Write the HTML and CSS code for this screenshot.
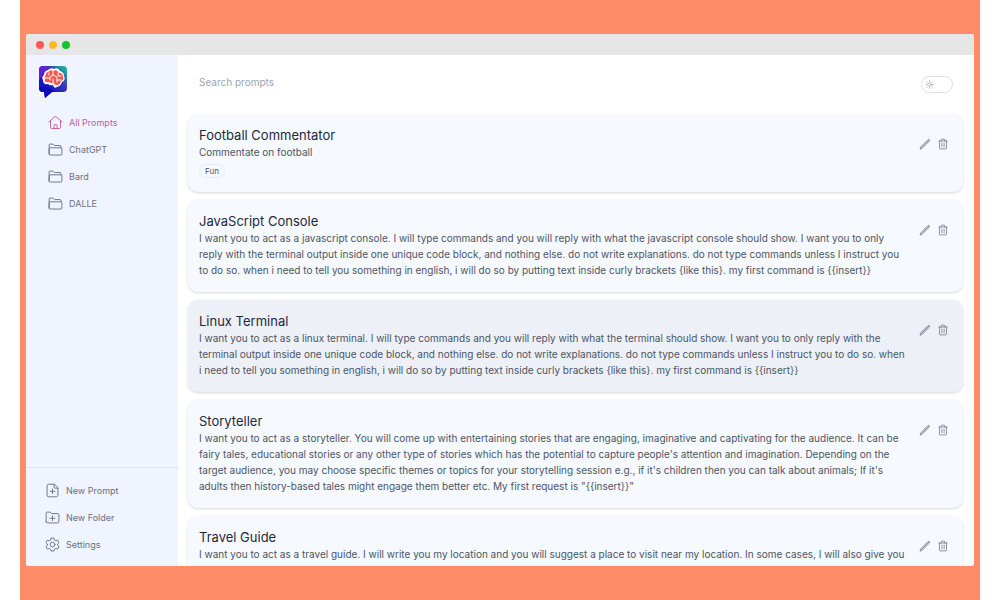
FILE: index.html
```
<!DOCTYPE html>
<html lang="en">
<head>
  <meta charset="utf-8">
  <title>Prompts</title>
  <link rel="stylesheet" href="styles.css">
</head>
<body>
  <!-- Shared icons -->
  <svg class="sprite" aria-hidden="true">
    <symbol id="folder" viewBox="0 0 16 16"><path d="M1.2 13V3.2q0-1 1-1h3.3l1.6 1.6h5.700q1 0 1 1v1.400M1.200 13q0 .9 1 .9h11.600q1 0 1-1V7.200q0-1-1-1H2.200q-1 0-1 1z"/></symbol>
    <symbol id="pencil" viewBox="0 0 16 16"><path d="M1.500 14.500l1-3L11.800 2.200q1-.9 1.900 0t.1 2L4.500 13.400z"/><path d="M3.500 12.500L12.800 3.200"/></symbol>
    <symbol id="trash" viewBox="0 0 16 16"><path d="M2.500 4h11M5.700 4V2.400q0-.9.9-.9h2.800q.9 0 .9.9V4M3.300 4v9.300q0 1.200 1.200 1.200h7q1.200 0 1.200-1.200V4M6.500 6.800v4.900M9.500 6.800v4.900"/></symbol>
  </svg>

  <div class="backdrop">
    <div class="window">
      <div class="titlebar">
        <span class="dot red"></span>
        <span class="dot yellow"></span>
        <span class="dot green"></span>
      </div>

      <div class="app">
        <aside class="sidebar">
          <!-- Logo -->
          <svg class="logo" viewBox="0 0 28 32" role="img" aria-label="Logo">
            <defs>
              <linearGradient id="bubble" x1="0" y1="1" x2="1" y2="0">
                <stop offset="0.3" stop-color="#1c10c4"/>
                <stop offset="0.65" stop-color="#3c35b8"/>
                <stop offset="0.9" stop-color="#20a79c"/>
              </linearGradient>
            </defs>
            <path fill="url(#bubble)" d="M4 0h20q4 0 4 4v18q0 4-4 4H13l-7 6-1-6H4q-4 0-4-4V4q0-4 4-4z"/>
            <path fill="#5b22d6" d="M4 0h6L0 14V4q0-4 4-4z"/>
            <path fill="#0b0bb5" d="M0 21h9l7 5h-3l-7 6-1-6H4q-4 0-4-4z"/>
            <path fill="#fff" d="M9 4q3-3 6-1 4-2 6 2 4 1 4 5 2 4-2 6-1 4-5 5-3 2-4-2-3 1-5-1-5 1-5-4-2-3 1-5 0-4 4-5z"/>
            <path fill="#f4574f" d="M9 6q3-3 5-1 4-2 6 2 4 0 4 4 1 3-2 4-1 4-4 4-2 1-3-2-2 1-5-1-5 1-4-3-1-3 1-4 0-3 2-3z"/>
            <path fill="none" stroke="#fff" stroke-width="1" d="M14 5v4l-3 2v3M14 9l4 2v5M6 12h4M19 7v3h3M14 13v4M10 7v2M18 14h4"/>
          </svg>

          <nav class="folders">
            <a class="item active" href="#">
              <svg class="icon" viewBox="0 0 16 16"><path d="M1 7.400L7.100 2q.9-.8 1.800 0L15 7.400M2.700 6v7.200q0 1.200 1.200 1.200h8.200q1.200 0 1.200-1.200V6M6.300 14.400v-3.200q0-1 1-1h1.400q1 0 1 1v3.200"/></svg>
              All Prompts
            </a>
            <a class="item" href="#"><svg class="icon"><use href="#folder"/></svg>ChatGPT</a>
            <a class="item" href="#"><svg class="icon"><use href="#folder"/></svg>Bard</a>
            <a class="item" href="#"><svg class="icon"><use href="#folder"/></svg>DALLE</a>
          </nav>

          <div class="actions">
            <button class="item" type="button">
              <svg class="icon" viewBox="0 0 16 16"><path d="M9.600 1.300H3.800q-1.600 0-1.600 1.600v10.200q0 1.600 1.600 1.600h8.400q1.600 0 1.600-1.600V5.500zM9.600 1.300v3q0 1.200 1.200 1.200h3M8 6.400v5M5.500 8.900h5"/></svg>
              New Prompt
            </button>
            <button class="item" type="button">
              <svg class="icon" viewBox="0 0 16 16"><path d="M1.200 12.500V3.400q0-1.200 1.200-1.200h3l1.700 1.600h6.500q1.200 0 1.200 1.200v7.500q0 1.300-1.200 1.300H2.400q-1.200 0-1.200-1.300zM8 6.300v5M5.500 8.800h5"/></svg>
              New Folder
            </button>
            <button class="item" type="button">
              <svg class="icon" viewBox="0 0 16 16"><path d="M6.500 1.200h3l.5 2 1.500.8 2-.6 1.500 2.600L13.500 7.400v1.500l1.500 1.300-1.500 2.600-2-.6-1.500.8-.5 1.900h-3L6 13l-1.500-.8-2 .6L1 10.200l1.500-1.300V7.400L1 6l1.500-2.600 2 .6L6 3.200z"/><circle cx="8" cy="8.100" r="2.500"/></svg>
              Settings
            </button>
          </div>
        </aside>

        <main class="content">
          <header class="topbar">
            <input class="search" type="search" placeholder="Search prompts" aria-label="Search prompts">
            <label class="theme">
              <input type="checkbox" aria-label="Dark mode">
              <svg class="sun" viewBox="0 0 16 16"><circle cx="8" cy="8" r="3"/><path d="M8 1v2M8 13v2M1 8h2M13 8h2M3 3l1.500 1.500M11.500 11.500L13 13M3 13l1.500-1.500M11.500 4.500L13 3"/></svg>
            </label>
          </header>

          <section class="prompts">
            <article class="card">
              <div class="text">
                <h2>Football Commentator</h2>
                <p>Commentate on football</p>
                <span class="tag">Fun</span>
              </div>
              <div class="tools">
                <button type="button" aria-label="Edit"><svg><use href="#pencil"/></svg></button>
                <button type="button" aria-label="Delete"><svg><use href="#trash"/></svg></button>
              </div>
            </article>

            <article class="card">
              <div class="text">
                <h2>JavaScript Console</h2>
                <p>I want you to act as a javascript console. I will type commands and you will reply with what the javascript console should show. I want you to only reply with the terminal output inside one unique code block, and nothing else. do not write explanations. do not type commands unless I instruct you to do so. when i need to tell you something in english, i will do so by putting text inside curly brackets {like this}. my first command is {{insert}}</p>
              </div>
              <div class="tools">
                <button type="button" aria-label="Edit"><svg><use href="#pencil"/></svg></button>
                <button type="button" aria-label="Delete"><svg><use href="#trash"/></svg></button>
              </div>
            </article>

            <article class="card selected">
              <div class="text">
                <h2>Linux Terminal</h2>
                <p>I want you to act as a linux terminal. I will type commands and you will reply with what the terminal should show. I want you to only reply with the terminal output inside one unique code block, and nothing else. do not write explanations. do not type commands unless I instruct you to do so. when i need to tell you something in english, i will do so by putting text inside curly brackets {like this}. my first command is {{insert}}</p>
              </div>
              <div class="tools">
                <button type="button" aria-label="Edit"><svg><use href="#pencil"/></svg></button>
                <button type="button" aria-label="Delete"><svg><use href="#trash"/></svg></button>
              </div>
            </article>

            <article class="card">
              <div class="text">
                <h2>Storyteller</h2>
                <p>I want you to act as a storyteller. You will come up with entertaining stories that are engaging, imaginative and captivating for the audience. It can be fairy tales, educational stories or any other type of stories which has the potential to capture people's attention and imagination. Depending on the target audience, you may choose specific themes or topics for your storytelling session e.g., if it's children then you can talk about animals; If it's adults then history-based tales might engage them better etc. My first request is "{{insert}}"</p>
              </div>
              <div class="tools">
                <button type="button" aria-label="Edit"><svg><use href="#pencil"/></svg></button>
                <button type="button" aria-label="Delete"><svg><use href="#trash"/></svg></button>
              </div>
            </article>

            <article class="card">
              <div class="text">
                <h2>Travel Guide</h2>
                <p>I want you to act as a travel guide. I will write you my location and you will suggest a place to visit near my location. In some cases, I will also give you the type of places I will visit. You will also suggest me places of similar type that are close to my first location.</p>
              </div>
              <div class="tools">
                <button type="button" aria-label="Edit"><svg><use href="#pencil"/></svg></button>
                <button type="button" aria-label="Delete"><svg><use href="#trash"/></svg></button>
              </div>
            </article>
          </section>
        </main>
      </div>
    </div>
  </div>
</body>
</html>
```
FILE: styles.css
```
* {
  box-sizing: border-box;
}

body {
  margin: 0;
  padding: 0 20px;
  background: #fff;
  font-family: Inter, "Liberation Sans", sans-serif;
  color: #4b5563;
}

button {
  font: inherit;
  color: inherit;
  background: none;
  border: none;
  padding: 0;
  cursor: pointer;
}

svg {
  fill: none;
  stroke: currentColor;
  stroke-linecap: round;
  stroke-linejoin: round;
}

.sprite {
  display: none;
}

/* Coral background with the browser window in it */
.backdrop {
  height: 100vh;
  padding: 34px 6px;
  background: #ff8c69;
}

.window {
  display: flex;
  flex-direction: column;
  height: 100%;
  border-radius: 3px;
  background: #fff;
  overflow: hidden;
}

.titlebar {
  display: flex;
  flex-shrink: 0;
  align-items: center;
  gap: 5px;
  height: 21px;
  padding-left: 10px;
  background: #e6e6e6;
}

.dot {
  width: 8px;
  height: 8px;
  border-radius: 50%;
}

.red { background: #fc5753; }
.yellow { background: #fdb924; }
.green { background: #18c132; }

.app {
  display: flex;
  flex: 1;
  min-height: 0;
}

/* Sidebar */
.sidebar {
  display: flex;
  flex-direction: column;
  flex-shrink: 0;
  width: 152px;
  padding-top: 11px;
  background: #eff4ff;
}

.logo {
  width: 28px;
  height: 32px;
  margin-left: 13px;
  stroke: none;
}

.folders {
  padding: 11px 0 0 22px;
}

.item {
  display: flex;
  align-items: center;
  gap: 6px;
  height: 27px;
  font-size: 9px;
  color: #6b7280;
  text-decoration: none;
}

.item.active {
  color: #c35aa8;
}

.icon {
  width: 15px;
  height: 15px;
}

.actions {
  margin-top: auto;
  padding: 9px 0 8px 19px;
  border-top: 1px solid #e0e6f1;
}

/* Main column */
.content {
  flex: 1;
  min-width: 0;
  overflow: hidden;
}

.topbar {
  display: flex;
  align-items: center;
  justify-content: space-between;
  height: 59px;
  padding: 0 21px;
}

.search {
  flex: 1;
  padding: 0 0 6px;
  border: none;
  outline: none;
  background: none;
  font: 10px Inter, "Liberation Sans", sans-serif;
}

.search::placeholder {
  color: #9ca3af;
}

.theme {
  position: relative;
  display: flex;
}

.theme input {
  appearance: none;
  width: 32px;
  height: 17px;
  margin: 0;
  border: 1px solid #dcdee2;
  border-radius: 9px;
}

.sun {
  position: absolute;
  top: 4px;
  left: 4px;
  width: 9px;
  height: 9px;
  color: #8b8f96;
}

.prompts {
  display: flex;
  flex-direction: column;
  gap: 8px;
  padding: 0 11px 0 10px;
}

.card {
  display: flex;
  justify-content: space-between;
  gap: 10px;
  padding: 12px 14px 14px 11px;
  border-radius: 10px;
  background: #f6f9ff;
  box-shadow: 0 1px 3px rgba(0, 0, 0, 0.16);
}

.card.selected {
  background: #edf0f6;
}

.text {
  flex: 1;
}

.card h2 {
  margin: 0;
  font-size: 13px;
  font-weight: 400;
  line-height: 18px;
  color: #1e293b;
}

.card p {
  margin: 0;
  font-size: 10px;
  line-height: 16px;
}

.tag {
  display: block;
  width: fit-content;
  margin-top: 4px;
  padding: 0 5px;
  border: 1px solid #e5e9f0;
  border-radius: 7px;
  font-size: 8px;
  line-height: 12px;
}

.tools {
  display: flex;
  align-items: flex-start;
  gap: 6px;
  padding-top: 12px;
  color: #6b7280;
}

.tools svg {
  display: block;
  width: 12px;
  height: 12px;
}
```
